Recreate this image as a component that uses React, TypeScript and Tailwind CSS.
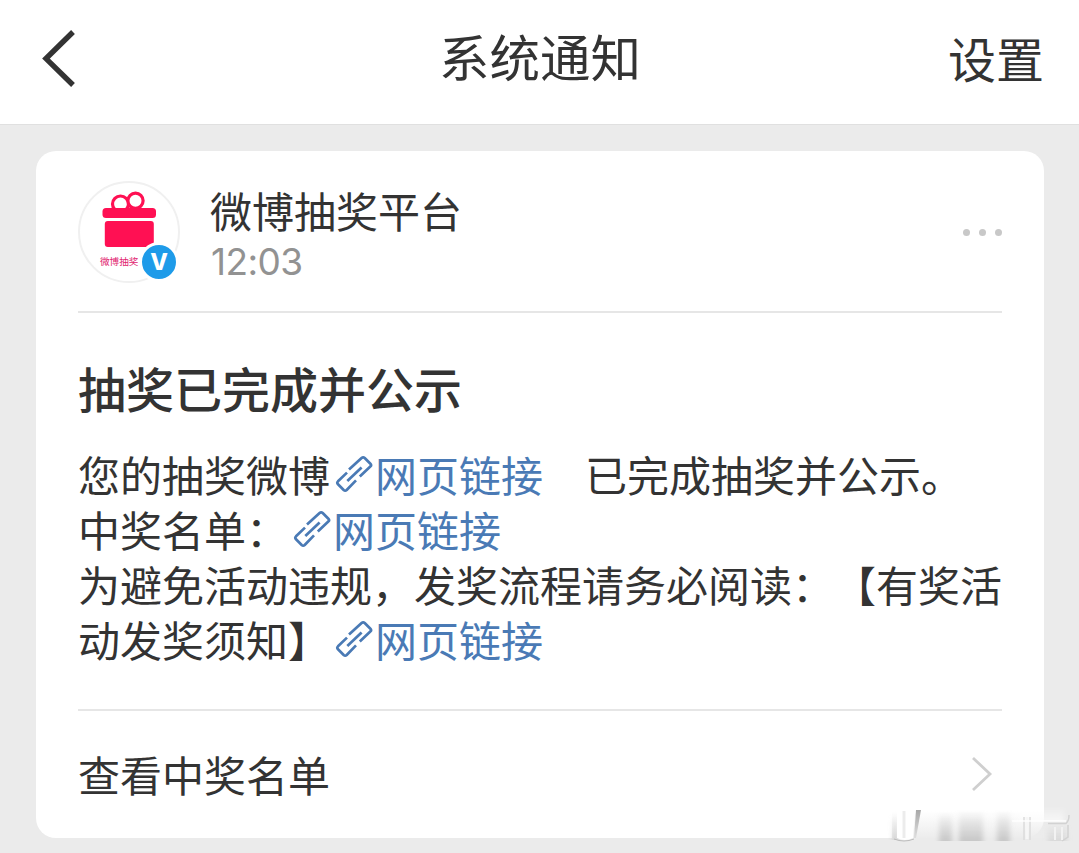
import type { ReactNode } from 'react';

const CARD_TITLE = '抽奖已完成并公示';

function BackIcon() {
  return (
    <svg className="h-[60px] w-[36px]" viewBox="0 0 36 60" fill="none" stroke="#333" strokeWidth="5.4">
      <path d="M33 3 6 29.6 33 56" />
    </svg>
  );
}

function LinkIcon() {
  return (
    <svg className="h-[38px] w-[38px] shrink-0" viewBox="0 0 38 38" fill="none" stroke="#4a7ab5" strokeWidth="2.7" strokeLinejoin="round">
      <path d="M14 14.5 26.600 3Q28.200 1.600 29.700 3L35.400 8.700Q36.800 10.200 35.300 11.600L24.800 21.600" />
      <path d="M12.300 26 26.600 12.500" />
      <path d="M12 17.600 3 26.300Q1.600 27.800 3 29.300L8.700 35Q10.200 36.400 11.700 35L21 25.400" />
    </svg>
  );
}

function WebLink() {
  return (
    <span className="flex items-center pl-[5px] text-[#4a7ab5]">
      <LinkIcon />
      <span className="pl-[2px]">网页链接</span>
    </span>
  );
}

function Line({ children }: { children: ReactNode }) {
  return <div className="flex h-[55px] items-center whitespace-pre">{children}</div>;
}

function Avatar() {
  return (
    <div className="relative size-[102px] shrink-0 rounded-full border-2 border-[#f0f0f0] bg-white">
      <svg className="absolute left-[20px] top-[8px] h-[58px] w-[60px]" viewBox="0 0 60 58">
        <g fill="none" stroke="#ff1053" strokeWidth="3.2">
          <circle cx="20.500" cy="13" r="8" />
          <circle cx="35.500" cy="9.800" r="7.600" fill="#fff" />
        </g>
        <rect x="2.5" y="17" width="53.5" height="10" rx="3.5" fill="#ff1053" />
        <rect x="4.8" y="30" width="49" height="26" rx="3" fill="#ff1053" />
      </svg>
      <span className="absolute left-[20px] top-[70px] whitespace-nowrap text-[9.6px] leading-[16px] text-[#df246f]">微博抽奖</span>
      <span className="absolute left-[59px] top-[59px] flex size-[40px] items-center justify-center rounded-full border-[3px] border-white bg-[#1e9be9] pt-px font-[Inter,sans-serif] text-[23px] font-extrabold leading-none text-white">
        V
      </span>
    </div>
  );
}

// Smudged mark that sits over the card's bottom right corner
function Smudge() {
  return (
    <svg className="pointer-events-none absolute bottom-0 right-0 h-[52px] w-[195px]" viewBox="884 801 195 52">
      <defs>
        <linearGradient id="fade" x1="0" y1="0" x2="0" y2="1">
          <stop offset="0" stopColor="#bdbdbd" stopOpacity="0" />
          <stop offset="1" stopColor="#bdbdbd" stopOpacity="0.75" />
        </linearGradient>
        <linearGradient id="haze" x1="0" y1="0" x2="0" y2="1">
          <stop offset="0" stopColor="#ececec" stopOpacity="0" />
          <stop offset="1" stopColor="#ececec" />
        </linearGradient>
        <linearGradient id="glow" x1="0" y1="0" x2="0" y2="1">
          <stop offset="0" stopColor="#fff" stopOpacity="0" />
          <stop offset="1" stopColor="#fff" stopOpacity="0.6" />
        </linearGradient>
        <linearGradient id="slash" x1="0" y1="0" x2="0" y2="1">
          <stop offset="0" stopColor="#a8a8a8" />
          <stop offset="1" stopColor="#dedede" />
        </linearGradient>
        <filter id="soft" x="-10%" width="120%">
          <feGaussianBlur stdDeviation="2.600 0.600" />
        </filter>
        <filter id="slight">
          <feGaussianBlur stdDeviation="0.7" />
        </filter>
      </defs>
      <rect x="892" y="811" width="152" height="27" fill="url(#haze)" />
      <rect x="1020" y="806" width="44" height="15" fill="url(#glow)" filter="url(#soft)" />
      <g fill="url(#fade)" filter="url(#soft)">
        <rect x="893" y="814" width="4" height="26" />
        <rect x="939" y="812" width="13" height="29" />
        <rect x="959" y="810" width="24" height="31" />
        <rect x="997" y="810" width="13" height="31" />
        <rect x="1048" y="824" width="19" height="17" fillOpacity="0.5" />
      </g>
      <g filter="url(#slight)">
        <path d="M897 811V838Q905 842 913 838L915 811Z" fill="#fff" />
        <path d="M894 839Q904 843 914 839" fill="none" stroke="#bbb" />
        <path d="M904 811V838" stroke="#ececec" strokeWidth="3" />
        <path d="M916 810H921L916 838H914Z" fill="url(#slash)" />
        <path d="M1024 817V840M1030 817V840" stroke="#dcdcdc" strokeWidth="1.5" />
        <path d="M1027 817V839" stroke="#f6f6f6" strokeWidth="3" />
        <path d="M1012 821H1066" stroke="#fff" strokeOpacity="0.7" strokeWidth="2" />
        <path d="M1048 823.500H1066Q1069 821 1069 815M1068 825V837L1062 841" fill="none" stroke="#d2d2d2" strokeWidth="1.5" />
        <path d="M1055 827V840M1062 827V840" stroke="#f2f2f2" strokeWidth="2" />
      </g>
    </svg>
  );
}

export default function App() {
  return (
    <div className="relative flex h-[853px] w-[1079px] flex-col overflow-hidden bg-[#ebebeb] font-['Noto_Sans_CJK_SC',sans-serif] text-[#333] [text-spacing-trim:space-all]">
      <header className="grid h-[125px] shrink-0 grid-cols-3 items-start border-b border-[#e0e0e0] bg-white pl-[36px] pr-[35px] pt-[25px]">
        <div className="pl-[4px] pt-[4px]">
          <BackIcon />
        </div>
        <h1 className="whitespace-nowrap text-center text-[50.500px] leading-[60px]">系统通知</h1>
        <span className="pt-[2px] text-right text-[48px] leading-[60px]">设置</span>
      </header>

      <main className="px-[36px] pt-[26px]">
        <section className="h-[687px] w-[1008px] rounded-[20px] bg-white px-[42px]">
          <div className="flex h-[162px] border-b-2 border-[#e6e6e6] pt-[30px]">
            <Avatar />
            <div className="-mt-px grow pl-[30px]">
              <div className="text-[42px] leading-[60px]">微博抽奖平台</div>
              <div className="pl-px font-[Inter,sans-serif] text-[37px] leading-[44px] tracking-[-0.6px] text-[#929292]">12:03</div>
            </div>
            <div className="flex h-[102px] items-center gap-[9px]">
              <i className="size-[7px] rounded-full bg-[#c8c8c8]" />
              <i className="size-[7px] rounded-full bg-[#c8c8c8]" />
              <i className="size-[7px] rounded-full bg-[#c8c8c8]" />
            </div>
          </div>

          <div className="h-[398px] border-b-2 border-[#e6e6e6] pt-[44px]">
            <h2 className="text-[48px] font-medium leading-[60px]">{CARD_TITLE}</h2>
            <div className="pt-[29px] text-[42px] leading-[55px]">
              <Line>
                您的抽奖微博
                <WebLink />
                <span className="pl-[42px]">已完成抽奖并公示。</span>
              </Line>
              <Line>
                中奖名单：
                <WebLink />
              </Line>
              <Line>为避免活动违规，发奖流程请务必阅读：【有奖活</Line>
              <Line>
                动发奖须知】
                <WebLink />
              </Line>
            </div>
          </div>

          <div className="flex h-[125px] items-center justify-between pr-[9px] text-[42px]">
            <span>查看中奖名单</span>
            <svg className="h-[36px] w-[22px]" viewBox="0 0 22 36" fill="none" stroke="#cfcfcf" strokeWidth="2.8">
              <path d="M2 2 19 18 2 34" />
            </svg>
          </div>
        </section>
      </main>
      <Smudge />
    </div>
  );
}
